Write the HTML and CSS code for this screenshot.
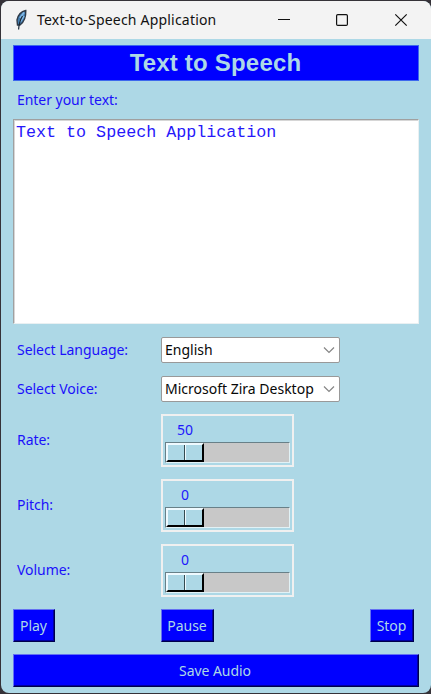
FILE: index.html
```html
<!DOCTYPE html>
<html lang="en">
<head>
<meta charset="utf-8">
<title>Text-to-Speech Application</title>
<link rel="stylesheet" href="styles.css">
</head>
<body>
<div class="window">
  <header class="titlebar">
    <svg class="feather" width="12" height="22" viewBox="0 0 12 22">
      <path d="M10.800 1.500C6 2.500 3 6 2 11L2.500 16L5 16C9 13 11 7 10.800 1.500Z" fill="#427caf" stroke="#303b48" stroke-width="1.400"/>
      <path d="M9 3.500L5 9M9 7L5 13" stroke="#81b9e7" stroke-width="1.800"/>
      <path d="M7.500 7C5 11 4 15 3.600 20.500" fill="none" stroke="#172635" stroke-width="1.200"/>
    </svg>
    <span class="caption">Text-to-Speech Application</span>
    <svg class="controls" width="132" height="14" viewBox="0 0 132 14" fill="none" stroke="#111" stroke-width="1.200">
      <path d="M0 6.500H12"/>
      <rect x="58.600" y="1.600" width="10.800" height="10.800" rx="1.200"/>
      <path d="M117.300 1.300L128.700 12.700M128.700 1.300L117.300 12.700"/>
    </svg>
  </header>
  <main class="content">
    <h1 class="heading"><span>Text to Speech</span></h1>
    <label class="label prompt">Enter your text:</label>
    <div class="editor">Text to Speech Application</div>
    <div class="row combo-row"><span class="label">Select Language:</span>
      <div class="combo"><span class="language">English</span><svg width="12" height="8" viewBox="0 0 12 8"><path d="M1 1.500L6 6.500L11 1.500" fill="none" stroke="#858585" stroke-width="1.200"/></svg></div></div>
    <div class="row combo-row"><span class="label voice-label">Select Voice:</span>
      <div class="combo"><span class="voice">Microsoft Zira Desktop</span><svg width="12" height="8" viewBox="0 0 12 8"><path d="M1 1.500L6 6.500L11 1.500" fill="none" stroke="#858585" stroke-width="1.200"/></svg></div></div>
    <div class="row scale-row"><span class="label">Rate:</span>
      <div class="scale"><span class="value">50</span><div class="trough"><div class="thumb"><i></i><i></i></div></div></div></div>
    <div class="row scale-row"><span class="label">Pitch:</span>
      <div class="scale"><span class="value">0</span><div class="trough"><div class="thumb"><i></i><i></i></div></div></div></div>
    <div class="row scale-row"><span class="label">Volume:</span>
      <div class="scale"><span class="value">0</span><div class="trough"><div class="thumb"><i></i><i></i></div></div></div></div>
    <div class="actions">
      <button class="play">Play</button><button class="pause">Pause</button><button class="stop">Stop</button>
    </div>
    <button class="save">Save Audio</button>
  </main>
</div>
</body>
</html>
```
FILE: styles.css
```css
* { box-sizing: border-box; }
body {
  margin: 0;
  width: 431px;
  height: 694px;
  padding: 1px 0 1px 1px;
  overflow: hidden;
  background: #353238;
  font: 14px/20px "Noto Sans", "Open Sans", sans-serif;
}
.window {
  width: 430px;
  height: 692px;
  overflow: hidden;
  border-radius: 8px;
  background: #add8e6;
}
.titlebar {
  height: 38px;
  display: flex;
  align-items: center;
  padding-left: 14px;
  background: #f3f3f3;
}
.feather { flex: none; }
.caption {
  width: 182px;
  margin-left: 10px;
  color: #111;
  font-size: 14px;
  letter-spacing: .2px;
  white-space: nowrap;
}
.controls { margin-left: 59px; }
.content {
  display: flex;
  flex-direction: column;
  padding: 6px 12px 0;
}
.heading {
  height: 36px;
  margin: 0;
  padding-right: 1px;
  border: 1px solid #3d68ee;
  background: #00f;
  color: #add8e6;
  font: bold 24px/34px "Liberation Sans", sans-serif;
  letter-spacing: .2px;
  text-align: center;
}
.label { color: #1b10fb; white-space: nowrap; letter-spacing: -.04px; }
.prompt { margin: 9px 0 0 4px; height: 29px; }
.editor {
  height: 205px;
  padding: 3px 1px;
  border: 1px solid #e9f0f2;
  border-top: 1px solid #a0a0a0;
  border-left: 1px solid #a0a0a0;
  box-shadow: inset 1px 1px #d6d6d6;
  padding: 4px 2px;
  background: #fff;
  color: #2618fa;
  font: 16.7px/18px "Liberation Mono", monospace;
}
.row { display: flex; align-items: center; }
.row .label { width: 148px; padding-left: 4px; }
.combo-row { height: 26px; margin-top: 13px; }
.combo {
  width: 179px;
  height: 26px;
  display: flex;
  align-items: center;
  justify-content: space-between;
  padding: 0 4px 0 3px;
  border: 1px solid #999;
  border-radius: 2px;
  background: #fff;
  color: #080808;
  white-space: nowrap;
}
.combo svg { flex: none; }
.scale-row { height: 53px; margin-top: 12px; }
.scale-row .label { margin-top: -1px; }
.scale {
  width: 133px;
  height: 53px;
  padding: 4px 2px 0 1px;
  border: 2px solid #f0f0f0;
}
.value {
  display: block;
  width: 42px;
  height: 22px;
  color: #2017fc;
  text-align: center;
}
.trough {
  width: 125px;
  height: 21px;
  margin-left: 1px;
  border: 1px solid #e2f2f6;
  border-top-color: #688088;
  border-left-color: #688088;
  background: #c8c8c8;
}
.thumb {
  width: 38px;
  height: 19px;
  display: flex;
  border: 2px solid #000;
  border-top-color: #effaff;
  border-left-color: #effaff;
  background: #add8e6;
}
.thumb i { width: 17px; }
.thumb i:first-child { border-right: 1px solid #344a51; }
.thumb i:last-child { border-left: 1px solid #effaff; }
.actions { display: flex; margin-top: 12px; }
button {
  height: 33px;
  margin: 0;
  padding: 0;
  border: 1px solid #00004b;
  border-top-color: #6471f2;
  border-left-color: #6471f2;
  border-radius: 0;
  background: #00f;
  box-shadow: inset -1px -1px #0000a0;
  color: #add8e6;
  font: inherit;
  letter-spacing: -.05px;
}
.play { width: 42px; padding-right: 1px; }
.pause { width: 53px; margin-left: 106px; padding-right: 1px; }
.stop { width: 44px; margin-left: 156px; padding-right: 1px; }
.save { width: 406px; margin-top: 12px; padding-right: 2px; }
```
